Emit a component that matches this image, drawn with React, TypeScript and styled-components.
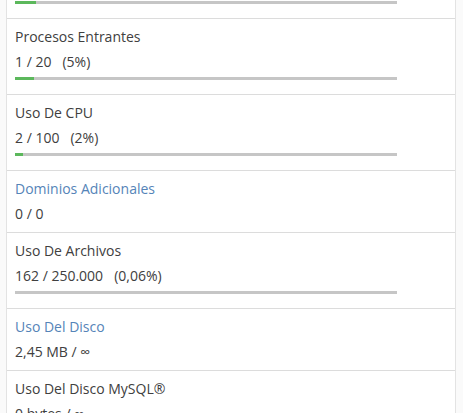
import styled, { createGlobalStyle } from 'styled-components';

const GlobalStyles = createGlobalStyle`
  html, body {
    margin: 0;
    padding: 0;
    background: #fff;
    overflow: hidden;
  }

  body {
    font-family: "Open Sans", "Noto Sans", Arial, sans-serif;
    font-size: 14px;
    color: #404040;
  }
`;

type Stat = {
  label: string;
  value: string;
  percent?: string;
  fill?: number;
  link?: boolean;
};

// the row above is scrolled out of view, only its bar shows
const topFill = 5.5;

const stats: Stat[] = [
  { label: 'Procesos Entrantes', value: '1 / 20', percent: '(5%)', fill: 5 },
  { label: 'Uso De CPU', value: '2 / 100', percent: '(2%)', fill: 2 },
  { label: 'Dominios Adicionales', value: '0 / 0', link: true },
  { label: 'Uso De Archivos', value: '162 / 250.000', percent: '(0,06%)', fill: 0 },
  { label: 'Uso Del Disco', value: '2,45 MB / ∞', link: true },
  { label: 'Uso Del Disco MySQL®', value: '0 bytes / ∞' },
];

export default function App() {
  return (
    <>
      <GlobalStyles />
      <Page>
        <StatsPanel>
          <StatRow $clipped>
            <Bar $flush>
              <BarFill style={{ width: `${topFill}%` }} />
            </Bar>
          </StatRow>
          {stats.map((s) => (
            <StatRow key={s.label}>
              <Label $link={s.link}>{s.label}</Label>
              <Value>
                {s.value}
                {s.percent && <Percent>{s.percent}</Percent>}
              </Value>
              {s.fill !== undefined && (
                <Bar>
                  <BarFill style={{ width: `${s.fill}%` }} />
                </Bar>
              )}
            </StatRow>
          ))}
        </StatsPanel>
      </Page>
    </>
  );
}

const Page = styled.div`
  width: 463px;
  height: 413px;
  background: #fafafa;
  overflow: hidden;
`;

const StatsPanel = styled.div`
  margin-left: 6px;
  width: 448px;
  min-height: 413px;
  background: #fff;
  border-left: 1px solid #e3e3e3;
  border-right: 1px solid #e3e3e3;
`;

const StatRow = styled.div<{ $clipped?: boolean }>`
  padding: ${(p) => (p.$clipped ? '1px 8px 8px' : '8px')};
  border-bottom: 1px solid #dcdcdc;
`;

const Label = styled.div<{ $link?: boolean }>`
  line-height: 20px;
  color: ${(p) => (p.$link ? '#5584b8' : '#404040')};
`;

const Value = styled.div`
  line-height: 20px;
  margin-top: 5px;
`;

const Percent = styled.span`
  margin-left: 11px;
`;

const Bar = styled.div<{ $flush?: boolean }>`
  width: 382px;
  height: 3px;
  margin: ${(p) => (p.$flush ? '0 0 6px' : '5px 0 6px')};
  background: #c6c6c6;
`;

const BarFill = styled.div`
  height: 100%;
  background: #5cb85c;
`;
